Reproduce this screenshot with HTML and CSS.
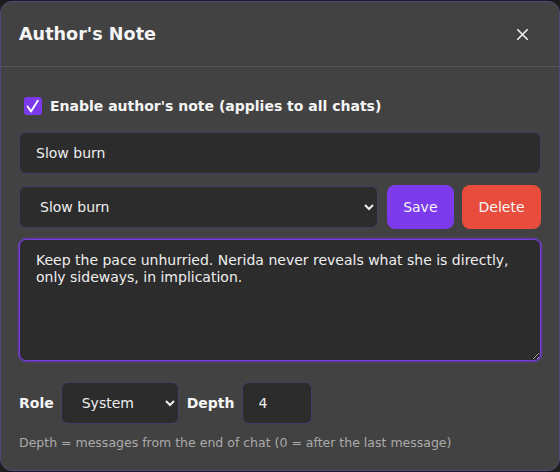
FILE: index.html
```html
<!DOCTYPE html>
<html lang="en">
<head>
<meta charset="utf-8">
<title>Author's Note</title>
<link rel="stylesheet" href="styles.css">
</head>
<body>
<div class="dialog">
  <div class="header">
    <h2 class="title">Author's Note</h2>
    <button class="close" aria-label="Close">
      <svg width="11" height="11" viewBox="0 0 11 11"><path d="M0.8 0.8 L10.2 10.2 M10.2 0.8 L0.8 10.2" stroke="#f2f2f2" stroke-width="1.6" stroke-linecap="round"/></svg>
    </button>
  </div>
  <div class="body">
    <label class="check-row">
      <span class="checkbox"><svg width="18" height="18" viewBox="0 0 18 18"><path d="M3.6 9.4 L7 14.6 L13.8 3.8" fill="none" stroke="#ffffff" stroke-width="1.9" stroke-linecap="round" stroke-linejoin="round"/></svg></span>
      <span class="check-label">Enable author's note (applies to all chats)</span>
    </label>
    <input class="field name-field" type="text" value="Slow burn">
    <div class="preset-row">
      <select class="field preset-select">
        <option>Slow burn</option>
      </select>
      <button class="btn btn-save">Save</button>
      <button class="btn btn-delete">Delete</button>
    </div>
    <textarea class="field note">Keep the pace unhurried. Nerida never reveals what she is directly, only sideways, in implication.</textarea>
    <div class="role-row">
      <span class="lbl">Role</span>
      <select class="field role-select">
        <option>System</option>
      </select>
      <span class="lbl">Depth</span>
      <input class="field depth" type="text" value="4">
    </div>
    <div class="hint">Depth = messages from the end of chat (0 = after the last message)</div>
  </div>
</div>
</body>
</html>
```
FILE: styles.css
```css
html, body {
  margin: 0;
  padding: 0;
  background: #1c1c1c;
  font-family: "DejaVu Sans", sans-serif;
  color-scheme: dark;
}
.dialog {
  box-sizing: border-box;
  width: 560px;
  height: 470px;
  margin-top: 1px;
  background: #424242;
  border: 1px solid #55437a;
  border-radius: 12px;
  overflow: hidden;
}
.header {
  height: 64px;
  display: flex;
  align-items: center;
  justify-content: space-between;
  padding: 0 18px;
  border-bottom: 1px solid #565656;
}
.title {
  margin: 0;
  font-size: 17.6px;
  font-weight: bold;
  color: #f5f5f5;
}
.close {
  width: 24px;
  height: 24px;
  margin-right: 7px;
  padding: 0;
  border: 0;
  background: transparent;
  display: flex;
  align-items: center;
  justify-content: center;
}
.body {
  padding: 30px 18px 0 18px;
  display: flex;
  flex-direction: column;
}
.check-row {
  display: flex;
  align-items: center;
  height: 18px;
}
.checkbox {
  width: 18px;
  height: 18px;
  margin-left: 5px;
  border-radius: 3px;
  background: #7c3aed;
  display: flex;
}
.check-label {
  margin-left: 8px;
  font-size: 14px;
  font-weight: bold;
  color: #f5f5f5;
}
.field {
  box-sizing: border-box;
  height: 42px;
  background: #2c2c2c;
  border: 1px solid #4a3b66;
  border-radius: 7px;
  color: #eeeeee;
  font-family: "DejaVu Sans", sans-serif;
  font-size: 14px;
  padding: 0 16px;
  outline: none;
}
.name-field {
  margin-top: 17px;
  width: 100%;
}
.preset-row {
  margin-top: 11px;
  display: flex;
  align-items: center;
  gap: 8px;
  height: 44px;
}
.preset-select {
  flex: 1;
  margin-right: 1px;
}
.btn {
  height: 44px;
  border: 0;
  border-radius: 8px;
  padding: 0 16.5px;
  color: #f5f5f5;
  font-family: "DejaVu Sans", sans-serif;
  font-size: 14px;
}
.btn-save { background: #7c3aed; }
.btn-delete { background: #e74c3c; }
.note {
  margin-top: 10px;
  height: 122px;
  width: 100%;
  padding: 12px 16px;
  line-height: 16.5px;
  resize: vertical;
  border-color: #7c3aed;
  box-shadow: 0 0 0 1.5px rgba(124, 58, 237, 0.35);
}
.role-row {
  margin-top: 21px;
  display: flex;
  align-items: center;
  gap: 8px;
}
.lbl {
  font-size: 14px;
  font-weight: bold;
  color: #f5f5f5;
}
.role-select {
  width: 118px;
  margin-left: -1px;
}
.depth {
  width: 70px;
  margin-left: -1px;
}
.hint {
  margin-top: 11px;
  font-size: 12.5px;
  line-height: 15px;
  color: #aaaaaa;
}
```
